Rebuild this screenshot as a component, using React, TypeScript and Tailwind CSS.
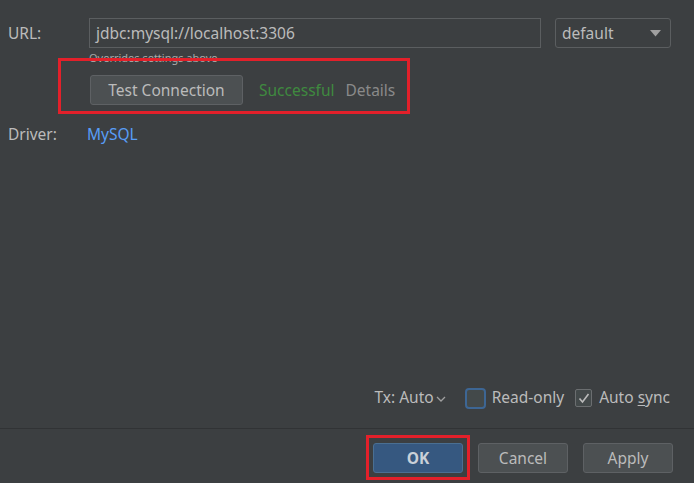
import React from 'react';

const font = { fontFamily: '"Noto Sans", "Liberation Sans", sans-serif' };

const App: React.FC = () => {
  return (
    <div
      className="w-[694px] h-[483px] bg-[#3c3f41] text-[#bbbbbb] flex flex-col overflow-hidden text-[15.5px]"
      style={font}
    >
      {/* form area */}
      <div className="pl-[8px] pr-[23px] pt-[18px]">
        <div className="flex items-center h-[30px]">
          <span className="w-[81px] pt-[2px]">URL:</span>
          <div className="w-[452px] h-[30px] border border-[#5b5e60] flex items-center pl-[6px] pt-[2px]">
            jdbc:mysql://localhost:3306
          </div>
          <div className="ml-[14px] w-[116px] h-[30px] border border-[#5b5e60] rounded-[3px] flex items-center justify-between pl-[6px] pr-[9px]">
            <span className="pt-[2px]">default</span>
            <svg width="11" height="7" viewBox="0 0 11 7">
              <path d="M0 0 L11 0 L5.5 6.5 Z" fill="#a0a0a0" />
            </svg>
          </div>
        </div>

        <div className="ml-[81px] mt-[3px] text-[11px] leading-[14px] text-[#a9a9a9]">
          Overrides settings above
        </div>

        <div className="relative ml-[82px] mt-[10px] flex items-center h-[30px]">
          <div className="absolute left-[-32px] top-[-17px] w-[352px] h-[56px] border-[3px] border-[#e3202a]" />
          <button className="w-[153px] h-[30px] bg-[#4c5052] border border-[#5e6164] rounded-[3px] text-[#bbbbbb] pt-[2px]">
            Test Connection
          </button>
          <span className="ml-[16px] pt-[2px] text-[#3f8a3f]">Successful</span>
          <span className="ml-[11px] pt-[2px] text-[#8a8a8a]">Details</span>
        </div>

        <div className="flex items-center mt-[20px] h-[20px]">
          <span className="w-[79px]">Driver:</span>
          <span className="text-[#589df6]">MySQL</span>
        </div>
      </div>

      <div className="flex-1" />

      {/* options row */}
      <div className="flex items-center justify-end pr-[24px] h-[24px]">
        <span>Tx: Auto</span>
        <svg width="10" height="6" viewBox="0 0 10 6" className="ml-[2px] mt-[1px]">
          <path d="M1 1 L5 5 L9 1" stroke="#a0a0a0" strokeWidth="1.3" fill="none" />
        </svg>
        <div className="ml-[19px] w-[21px] h-[21px] rounded-[4px] border-2 border-[#3d6694] bg-[#43494a]" />
        <span className="ml-[6px]">Read-only</span>
        <div className="ml-[11px] w-[17px] h-[18px] rounded-[2px] border border-[#6b6e70] bg-[#43494a] flex items-center justify-center">
          <svg width="12" height="11" viewBox="0 0 12 11">
            <path d="M1.5 5.5 L4.5 9 L10.5 1" stroke="#bbbbbb" strokeWidth="1.6" fill="none" />
          </svg>
        </div>
        <span className="ml-[7px]">
          Auto <span className="underline underline-offset-2">s</span>ync
        </span>
      </div>

      <div className="mt-[18px] h-px bg-[#313335]" />

      {/* dialog buttons */}
      <div className="flex items-center justify-end pr-[21px] pt-[14px] pb-[10px] gap-[15px]">
        <div className="relative">
          <div className="absolute left-[-7px] top-[-8px] w-[104px] h-[45px] border-[3px] border-[#e3202a]" />
          <button className="w-[90px] h-[30px] bg-[#365880] border border-[#4a6f92] rounded-[3px] font-bold text-[#c9d0d8] pt-[2px]">
            OK
          </button>
        </div>
        <button className="w-[90px] h-[30px] bg-[#4c5052] border border-[#5e6164] rounded-[3px] pt-[2px]">
          Cancel
        </button>
        <button className="w-[90px] h-[30px] bg-[#4c5052] border border-[#5e6164] rounded-[3px] pt-[2px]">
          Apply
        </button>
      </div>
    </div>
  );
};

export default App;
